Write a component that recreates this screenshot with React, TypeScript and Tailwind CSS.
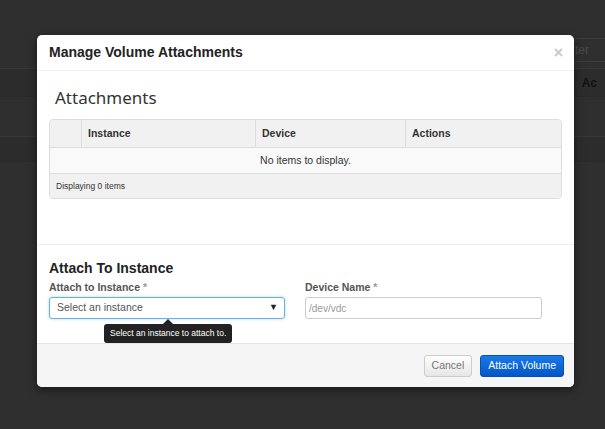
import React from "react";

const sans = { fontFamily: '"Liberation Sans", Arial, sans-serif' };

function Backdrop() {
  return (
    <div className="absolute inset-0 bg-[#2f2f2f]">
      <div className="relative h-[69px] border-b border-[#383838]">
        <div className="absolute left-[562px] top-[38px] flex h-[24px] w-[60px] items-center rounded-[3px] border border-[#3c3c3c] pl-[12px] text-[12px] text-[#4a4a4a]">
          ter
        </div>
      </div>
      <div className="flex h-[28px] items-center justify-end border-b border-[#2a2a2a] bg-[#2c2c2c] pr-2 text-[12px] font-bold text-[#111]">
        Ac
      </div>
      <div className="h-[40px] border-b border-[#383838]" />
      <div className="h-[25px] border-b border-[#2a2a2a] bg-[#2c2c2c]" />
    </div>
  );
}

function AttachmentsTable() {
  return (
    <div className="mx-3 overflow-hidden rounded-[4px] border border-[#ddd] text-[10.5px] text-[#333]">
      <div className="flex h-[27px] bg-[#f1f1f1] font-bold">
        <div className="w-[32px] border-r border-[#ddd]" />
        <div className="flex w-[174px] items-center border-r border-[#ddd] pl-[6px]">Instance</div>
        <div className="flex w-[150px] items-center border-r border-[#ddd] pl-[6px]">Device</div>
        <div className="flex flex-1 items-center pl-[6px]">Actions</div>
      </div>
      <div className="flex h-[26px] items-center justify-center border-t border-[#ddd] bg-[#f9f9f9]">
        No items to display.
      </div>
      <div className="flex h-[25px] items-center border-t border-[#ddd] bg-[#f1f1f1] pl-[6px] text-[8.5px]">
        Displaying 0 items
      </div>
    </div>
  );
}

export default function App() {
  return (
    <div className="relative h-[429px] w-[605px] overflow-hidden" style={sans}>
      <Backdrop />
      <div className="absolute left-[37px] top-[35px] w-[537px] rounded-[5px] bg-white shadow-[0_3px_10px_rgba(0,0,0,0.5)]">
        <div className="flex h-[36px] items-center justify-between border-b border-[#f0f0f0] pl-3 pr-[11px]">
          <h3 className="text-[14px] font-bold text-[#222]">Manage Volume Attachments</h3>
          <span className="text-[16px] font-bold leading-none text-[#c8c8c8]">×</span>
        </div>

        <div className="h-[174px] border-b border-[#eee] pt-[17px]">
          <h2
            className="mb-[11px] ml-[18px] text-[17px] leading-[20px] text-[#333]"
            style={{ fontFamily: '"Noto Sans", "Open Sans", sans-serif' }}
          >
            Attachments
          </h2>
          <AttachmentsTable />
        </div>

        <div className="relative px-3 pb-[24px] pt-[15px]">
          <h4 className="text-[14px] font-bold leading-[17px] text-[#222]">Attach To Instance</h4>
          <div className="mt-[3px] flex gap-[20px]">
            <div className="w-[236px]">
              <label className="block text-[10.5px] font-bold leading-[15px] text-[#555]">
                Attach to Instance <span className="text-[#999]">*</span>
              </label>
              <div className="mt-[2px] flex h-[22px] items-center justify-between rounded-[3px] border border-[#66afe9] pl-[7px] pr-[6px] text-[10.5px] text-[#555] shadow-[0_0_3px_rgba(102,175,233,0.5)]">
                <span>Select an instance</span>
                <span className="text-[9px] text-[#222]">▼</span>
              </div>
            </div>
            <div className="w-[237px]">
              <label className="block text-[10.5px] font-bold leading-[15px] text-[#555]">
                Device Name <span className="text-[#999]">*</span>
              </label>
              <div className="mt-[2px] flex h-[22px] items-center rounded-[3px] border border-[#ccc] pl-[3px] text-[10px] text-[#999]">
                /dev/vdc
              </div>
            </div>
          </div>
          <div className="absolute left-[67px] top-[74px]">
            <div className="ml-[59px] h-0 w-0 border-x-[5px] border-b-[5px] border-x-transparent border-b-[#222]" />
            <div className="rounded-[3px] bg-[#222] px-[6px] py-[4px] text-[8.5px] leading-[11px] text-white">
              Select an instance to attach to.
            </div>
          </div>
        </div>

        <div className="flex h-[44px] items-center justify-end gap-[8px] rounded-b-[5px] border-t border-[#e5e5e5] bg-[#f5f5f5] pr-[10px]">
          <button className="h-[22px] rounded-[3px] border border-[#ccc] bg-gradient-to-b from-white to-[#e6e6e6] px-[7px] text-[10.5px] text-[#777]">
            Cancel
          </button>
          <button className="h-[22px] rounded-[3px] border border-[#0550b0] bg-gradient-to-b from-[#1a7ae8] to-[#0455c8] px-[7px] text-[10.5px] text-white">
            Attach Volume
          </button>
        </div>
      </div>
    </div>
  );
}
